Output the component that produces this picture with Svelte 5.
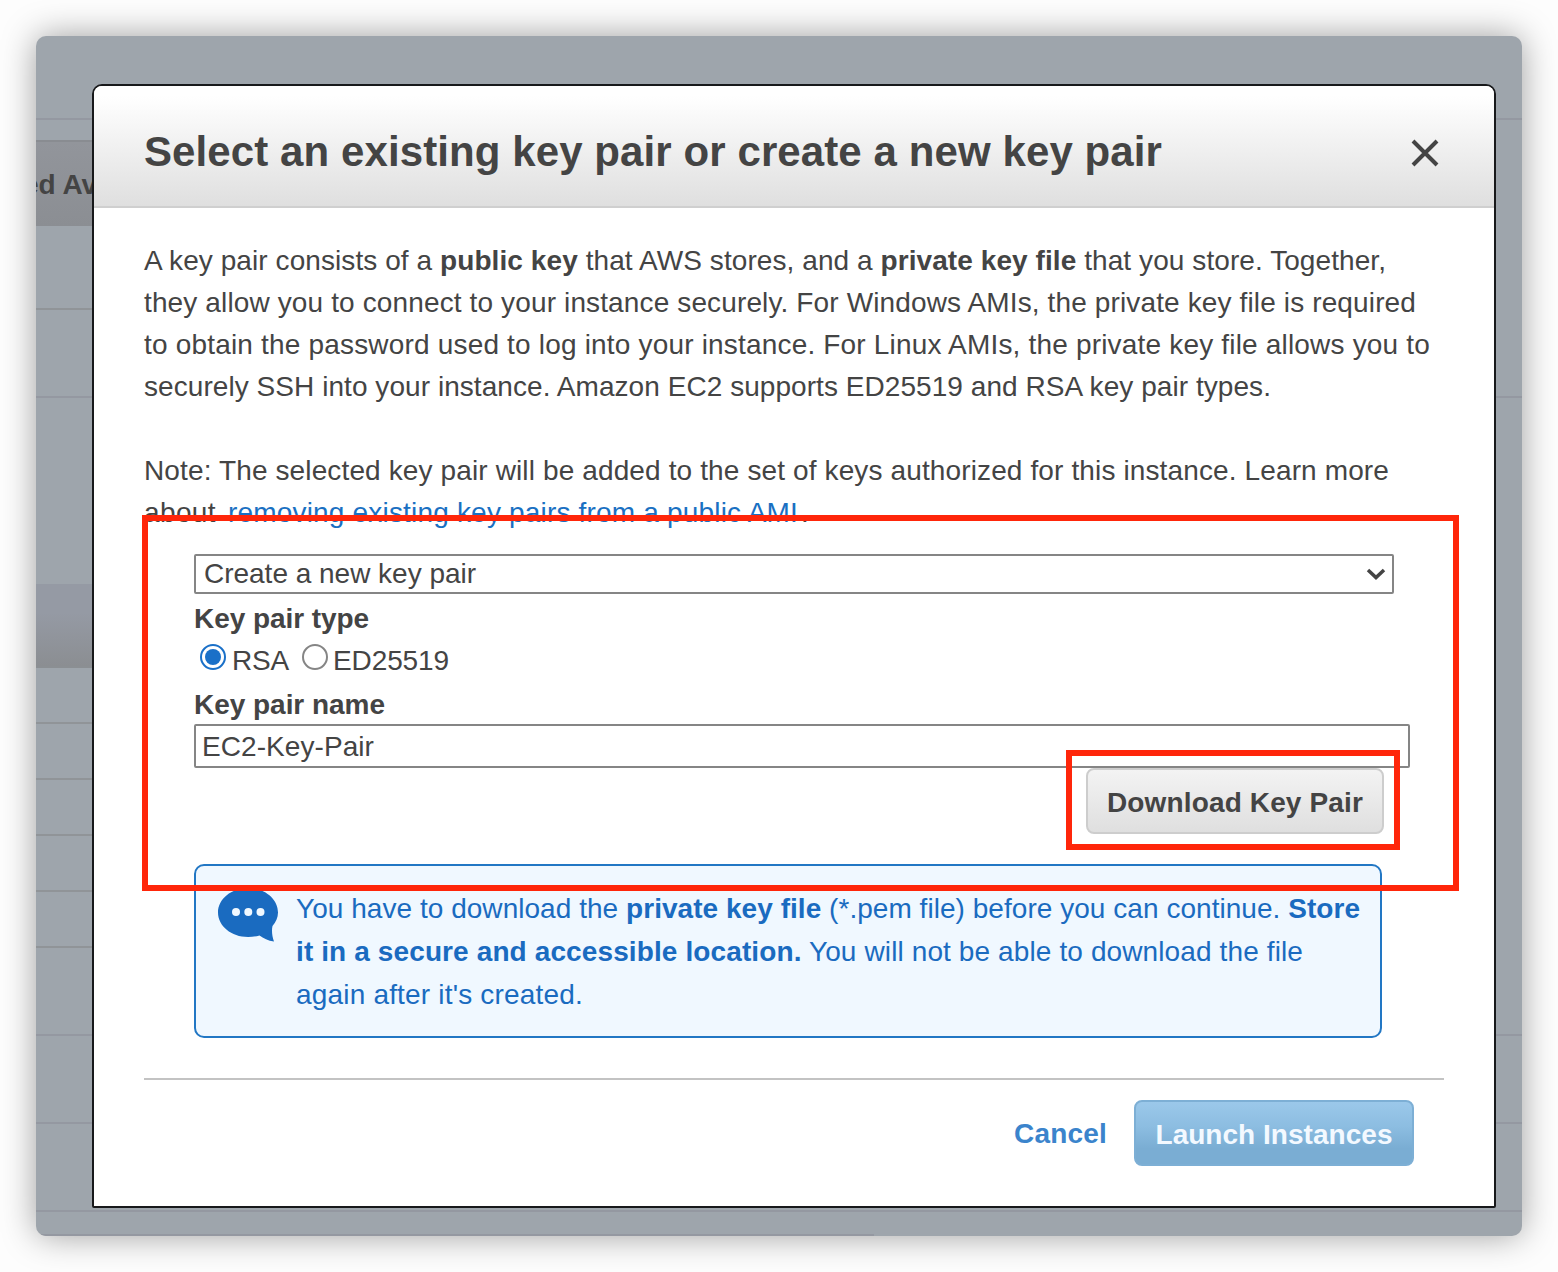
<script lang="ts">
  // Spreads the leftover width of a text run evenly across its letters.
  function fit(node: HTMLElement, width: number) {
    const count = (node.textContent ?? '').length;
    const natural = node.getBoundingClientRect().width;
    node.style.letterSpacing = `${(width - natural) / count}px`;
  }

  // Rows of the dimmed page behind the dialog: height and look.
  const rows = [
    { h: 84, kind: 'full' },
    { h: 20, kind: 'plain' },
    { h: 86, kind: 'head' },
    { h: 84, kind: 'left' },
    { h: 88, kind: 'full' },
    { h: 186, kind: 'plain' },
    { h: 84, kind: 'band' },
    { h: 56, kind: 'left' },
    { h: 56, kind: 'left' },
    { h: 56, kind: 'left' },
    { h: 56, kind: 'left' },
    { h: 56, kind: 'left' },
    { h: 88, kind: 'full' },
    { h: 88, kind: 'full' },
    { h: 88, kind: 'full' },
    { h: 24, kind: 'half' }
  ];
</script>

<main class="page">
  <div class="window">
    <div class="backdrop">
      {#each rows as row}
        <div class="row {row.kind}" style:height="{row.h}px">
          {#if row.kind === 'head'}<b class="column">ed Av</b>{/if}
        </div>
      {/each}
    </div>

    <section class="dialog">
      <header>
        <h1><span use:fit={1018}>Select an existing key pair or create a new key pair</span></h1>
        <svg class="close" viewBox="0 0 28 28"><path d="M2 2 26 26M26 2 2 26" /></svg>
      </header>

      <div class="body">
        <div class="copy">
          <div><span use:fit={1242}>A key pair consists of a <b>public key</b> that AWS stores, and a <b>private key file</b> that you store. Together,</span></div>
          <div><span use:fit={1272}>they allow you to connect to your instance securely. For Windows AMIs, the private key file is required</span></div>
          <div><span use:fit={1286}>to obtain the password used to log into your instance. For Linux AMIs, the private key file allows you to</span></div>
          <div><span use:fit={1127}>securely SSH into your instance. Amazon EC2 supports ED25519 and RSA key pair types.</span></div>
        </div>
        <div class="copy note">
          <div><span use:fit={1245}>Note: The selected key pair will be added to the set of keys authorized for this instance. Learn more</span></div>
          <div class="about"><span use:fit={72}>about</span><a href="#top" use:fit={570}>removing existing key pairs from a public AMI</a><span>.</span></div>
        </div>

        <div class="form">
          <div class="select">
            <span use:fit={272}>Create a new key pair</span>
            <svg class="chevron" viewBox="0 0 20 12"><path d="M2 2 10 9.5 18 2" /></svg>
          </div>
          <div class="label type"><span use:fit={175}>Key pair type</span></div>
          <div class="radios">
            <svg class="radio on" viewBox="0 0 26 26"><circle cx="13" cy="13" r="12" /><circle class="dot" cx="13" cy="13" r="8" /></svg>
            <span class="rsa" use:fit={57}>RSA</span>
            <svg class="radio" viewBox="0 0 26 26"><circle cx="13" cy="13" r="12" /></svg>
            <span class="ed" use:fit={116}>ED25519</span>
          </div>
          <div class="label name"><span use:fit={191}>Key pair name</span></div>
          <div class="input"><span use:fit={172}>EC2-Key-Pair</span></div>
          <div class="actions">
            <button class="download"><span use:fit={256}>Download Key Pair</span></button>
          </div>
          <div class="info">
            <svg class="bubble" viewBox="0 0 60 54">
              <path d="M30 0C46.600 0 60 10.700 60 24.500c0 5.500-2.200 9.500-5.500 13.500-1 4.500-.5 9.500 1.500 15.500-6-.8-10.500-3-14.500-6-3.500 1-7.500 1.500-11.500 1.500C13.400 49 0 38 0 24.500S13.400 0 30 0Z" />
              <circle cx="18" cy="24" r="4" /><circle cx="30.300" cy="24" r="4" /><circle cx="42.500" cy="24" r="4" />
            </svg>
            <div class="message">
              <div><span use:fit={1064}>You have to download the <b>private key file</b> (*.pem file) before you can continue. <b>Store</b></span></div>
              <div><span use:fit={1007}><b>it in a secure and accessible location.</b> You will not be able to download the file</span></div>
              <div><span use:fit={287}>again after it's created.</span></div>
            </div>
          </div>
        </div>

        <footer>
          <span class="cancel" use:fit={93}>Cancel</span>
          <button class="launch"><span use:fit={237}>Launch Instances</span></button>
        </footer>
      </div>

      <div class="mark mark-form"></div>
      <div class="mark mark-download"></div>
    </section>
  </div>
</main>

<style>
  :global(body) { background: #fdfdfd; }
  .page {
    box-sizing: border-box;
    width: 1558px;
    height: 1272px;
    padding: 36px;
    overflow: hidden;
    font: 28px/42px "Liberation Sans", Arial, sans-serif;
    color: #444;
    white-space: nowrap;
  }
  .window {
    display: grid;
    width: 1486px;
    height: 1200px;
    border-radius: 10px;
    background: #9ea5ac;
    box-shadow: 0 0 34px rgba(0, 0, 0, .38);
  }
  .backdrop {
    grid-area: 1 / 1;
    overflow: hidden;
    border-radius: 10px;
  }
  .row { box-sizing: border-box; overflow: hidden; }
  .full { border-bottom: 2px solid #9498a1; }
  .left { width: 60px; border-bottom: 2px solid #909498; }
  .half { width: 838px; border-bottom: 2px solid #9498a1; }
  .head {
    width: 60px;
    background: linear-gradient(#92959b, #8b8e93);
    border-top: 2px solid #898c91;
  }
  .band {
    width: 60px;
    background: linear-gradient(#959aa4 35%, #8b8e92);
    border-bottom: 2px solid #8b8f93;
  }
  .column { display: block; margin: 22px 0 0 -13px; }
  .dialog {
    grid-area: 1 / 1;
    position: relative;
    box-sizing: border-box;
    width: 1404px;
    height: 1124px;
    margin: 48px 0 0 56px;
    border: 2px solid #18191b;
    border-radius: 10px 10px 2px 2px;
    background: #fff;
  }
  header {
    display: flex;
    box-sizing: border-box;
    height: 122px;
    padding: 0 55px 0 50px;
    align-items: center;
    justify-content: space-between;
    border-bottom: 2px solid #cfcfcf;
    border-radius: 8px 8px 0 0;
    background: linear-gradient(#fff 8%, #dfdfdf);
  }
  h1 {
    margin: 12px 0 0;
    font-size: 42px;
    line-height: 50px;
  }
  .close {
    width: 28px;
    height: 28px;
    margin-top: 14px;
    fill: none;
    stroke: #444;
    stroke-width: 4;
  }
  .body { padding: 32px 50px 0; }
  .copy > div { height: 42px; }
  .note { margin-top: 42px; }
  .about { display: flex; }
  a { margin: 0 3px 0 12px; color: #1a70c2; text-decoration: none; }
  .form { padding: 20px 0 0 50px; }
  .select {
    display: flex;
    box-sizing: border-box;
    width: 1200px;
    height: 40px;
    padding: 0 6px 0 8px;
    align-items: center;
    justify-content: space-between;
    border: 2px solid #858585;
    border-radius: 2px;
  }
  .chevron {
    width: 20px;
    height: 12px;
    fill: none;
    stroke: #444;
    stroke-width: 3.500;
  }
  .label { font-weight: 700; }
  .type { margin-top: 4px; height: 42px; }
  .name { height: 40px; margin-top: 2px; }
  .radios { display: flex; height: 42px; padding-left: 6px; }
  .radio {
    width: 26px;
    height: 26px;
    margin-top: 4px;
    fill: #fff;
    stroke: #858585;
    stroke-width: 2;
  }
  .on { stroke: #1a70c8; }
  .dot { fill: #1a70c8; stroke: none; }
  .rsa { margin: 0 13px 0 6px; }
  .ed { margin-left: 5px; }
  .input {
    box-sizing: border-box;
    width: 1216px;
    height: 44px;
    padding-left: 6px;
    line-height: 42px;
    border: 2px solid #858585;
    border-radius: 2px;
  }
  .actions { display: flex; width: 1190px; justify-content: flex-end; }
  button {
    box-sizing: border-box;
    height: 66px;
    padding: 2px 0 0;
    font: 700 28px/62px "Liberation Sans", Arial, sans-serif;
    border-radius: 8px;
  }
  .download {
    width: 298px;
    color: #444;
    border: 2px solid #cdcdcd;
    background: linear-gradient(#f3f3f3, #dfdfdf);
  }
  .info {
    display: flex;
    box-sizing: border-box;
    width: 1188px;
    height: 174px;
    margin-top: 30px;
    padding: 22px 0 0 22px;
    gap: 18px;
    color: #1a6bc0;
    border: 2px solid #2277c4;
    border-radius: 10px;
    background: #f0f8ff;
  }
  .bubble { width: 60px; height: 54px; fill: #1a6bc0; }
  .bubble circle { fill: #f0f8ff; }
  .message > div { height: 43px; }
  footer {
    display: flex;
    margin-top: 40px;
    padding: 20px 30px 0 0;
    align-items: center;
    justify-content: flex-end;
    gap: 27px;
    border-top: 2px solid #c3c3c3;
  }
  .cancel { padding-top: 2px; font-weight: 700; color: #3b84cc; }
  .launch {
    width: 280px;
    color: #f3f9ff;
    border: 2px solid #7dafd5;
    background: linear-gradient(#9bc8ea, #8cbde1 40%, #7aadd3 75%);
  }
  .mark { position: absolute; box-sizing: border-box; border: 6px solid #ff260a; }
  .mark-form { left: 48px; top: 429px; width: 1317px; height: 376px; }
  .mark-download { left: 972px; top: 664px; width: 334px; height: 100px; }
</style>
